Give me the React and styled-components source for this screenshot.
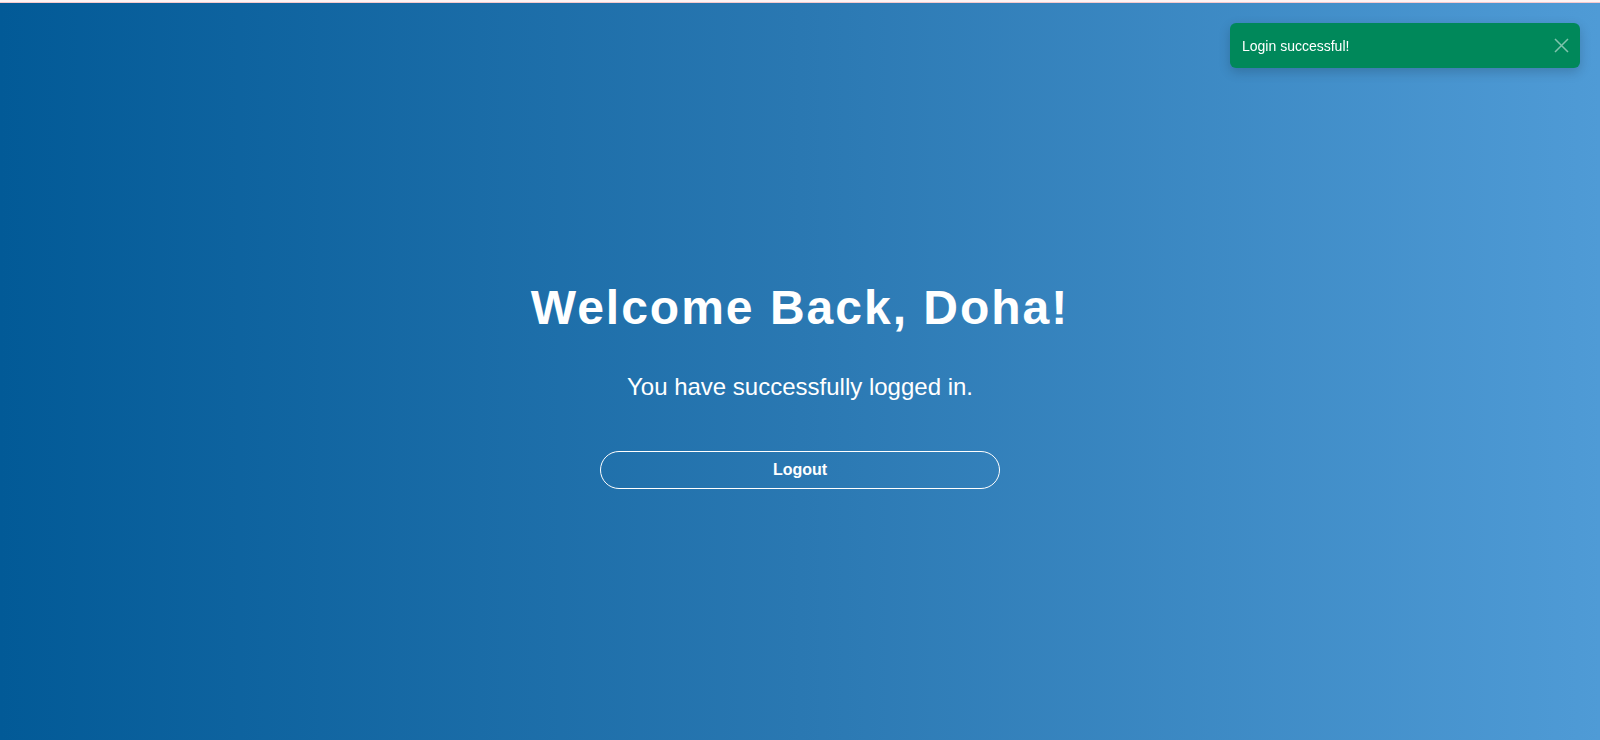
import styled, { createGlobalStyle } from "styled-components";

const GlobalStyle = createGlobalStyle`
  html, body {
    margin: 0;
    padding: 0;
    height: 100%;
  }

  body {
    font-family: "Liberation Sans", Arial, sans-serif;
    background: #ffffff;
  }
`;

const Page = styled.div`
  min-height: 740px;
  display: flex;
  flex-direction: column;
`;

const TopLine = styled.div`
  height: 2px;
  background: #fdf4f4;
  border-bottom: 1px solid #f6c9cd;
`;

const Hero = styled.main`
  flex: 1;
  display: flex;
  flex-direction: column;
  align-items: center;
  justify-content: center;
  padding-top: 26px;
  background: linear-gradient(90deg, #025a97 0%, #2a78b2 50%, #4f9bd6 100%);
  color: #ffffff;
  text-align: center;
`;

const Title = styled.h1`
  margin: 0;
  font-size: 48px;
  line-height: 56px;
  font-weight: 700;
  letter-spacing: 2px;
`;

const Subtitle = styled.p`
  margin: 37px 0 0;
  font-size: 24px;
  line-height: 28px;
`;

const LogoutButton = styled.button`
  margin-top: 50px;
  width: 400px;
  height: 38px;
  border: 1px solid #ffffff;
  border-radius: 19px;
  background: transparent;
  color: #ffffff;
  font-family: inherit;
  font-size: 16px;
  font-weight: 700;
  cursor: pointer;
`;

const Toast = styled.div`
  position: fixed;
  top: 23px;
  right: 20px;
  width: 350px;
  height: 45px;
  box-sizing: border-box;
  padding: 0 11px 0 12px;
  display: flex;
  align-items: center;
  justify-content: space-between;
  background: #00885a;
  color: #ffffff;
  border-radius: 6px;
  box-shadow: 0 4px 12px rgba(0, 0, 0, 0.18);
  font-size: 14px;
`;

const CloseButton = styled.button`
  width: 16px;
  height: 16px;
  padding: 0;
  border: none;
  background: transparent;
  color: rgba(255, 255, 255, 0.5);
  display: flex;
  align-items: center;
  justify-content: center;
  cursor: pointer;
`;

const App = () => {
  return (
    <Page>
      <GlobalStyle />
      <TopLine />
      <Hero>
        <Title>Welcome Back, Doha!</Title>
        <Subtitle>You have successfully logged in.</Subtitle>
        <LogoutButton>Logout</LogoutButton>
      </Hero>
      <Toast>
        <span>Login successful!</span>
        <CloseButton aria-label="close">
          <svg width="15" height="15" viewBox="0 0 15 15">
            <path d="M1 1L14 14M14 1L1 14" stroke="currentColor" strokeWidth="1.5" />
          </svg>
        </CloseButton>
      </Toast>
    </Page>
  );
};

export default App;
